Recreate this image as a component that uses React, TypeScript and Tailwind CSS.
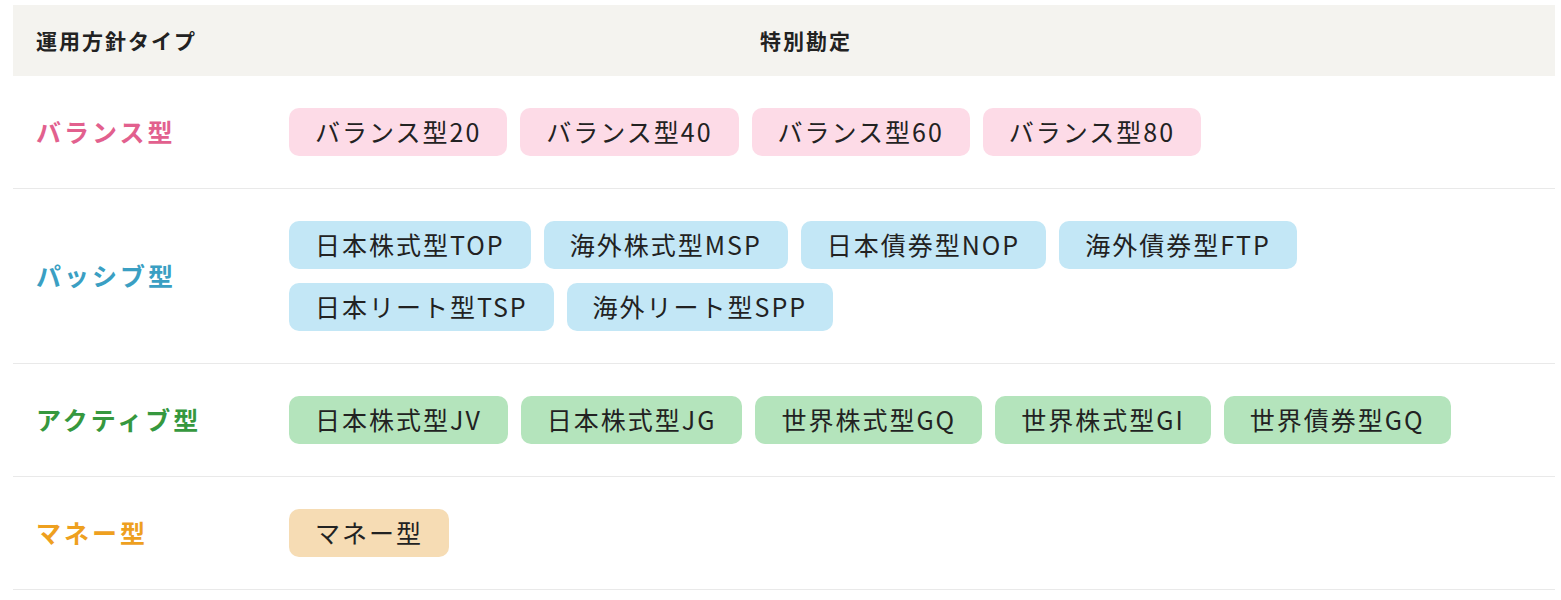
import React from 'react';

type Row = {
  label: string;
  labelColor: string;
  pillColor: string;
  lines: string[][];
};

const rows: Row[] = [
  {
    label: 'バランス型',
    labelColor: 'text-[#e2608e]',
    pillColor: 'bg-[#fddbe7]',
    lines: [['バランス型20', 'バランス型40', 'バランス型60', 'バランス型80']],
  },
  {
    label: 'パッシブ型',
    labelColor: 'text-[#3a9fc3]',
    pillColor: 'bg-[#c3e7f6]',
    lines: [
      ['日本株式型TOP', '海外株式型MSP', '日本債券型NOP', '海外債券型FTP'],
      ['日本リート型TSP', '海外リート型SPP'],
    ],
  },
  {
    label: 'アクティブ型',
    labelColor: 'text-[#36983e]',
    pillColor: 'bg-[#b4e4bc]',
    lines: [['日本株式型JV', '日本株式型JG', '世界株式型GQ', '世界株式型GI', '世界債券型GQ']],
  },
  {
    label: 'マネー型',
    labelColor: 'text-[#eea01f]',
    pillColor: 'bg-[#f6dcb4]',
    lines: [['マネー型']],
  },
];

const Pills: React.FC<{ row: Row }> = ({ row }) => (
  <div className="flex flex-col gap-[14px]">
    {row.lines.map((line, i) => (
      <div key={i} className="flex gap-[13px]">
        {line.map((item) => (
          <span
            key={item}
            className={`${row.pillColor} h-[48px] px-[26px] rounded-[10px] flex items-center text-[25px] tracking-[2px] text-[#222] whitespace-nowrap`}
          >
            {item}
          </span>
        ))}
      </div>
    ))}
  </div>
);

export default function App() {
  return (
    <div className="bg-white min-h-[600px] pt-[5px] pl-[13px] pr-[6px] font-['Noto_Sans_CJK_JP','Noto_Sans',sans-serif]">
      <div className="flex items-center h-[71px] bg-[#f4f3ef] text-[21px] font-bold tracking-[2px] text-[#222]">
        <div className="w-[276px] pl-[23px]">運用方針タイプ</div>
        <div className="w-[1034px] text-center">特別勘定</div>
      </div>
      {rows.map((row) => (
        <div key={row.label} className="flex items-center py-8 border-b border-[#e9e9e9]">
          <div className={`w-[276px] pl-[23px] text-[25px] font-bold tracking-[3px] ${row.labelColor}`}>
            {row.label}
          </div>
          <Pills row={row} />
        </div>
      ))}
    </div>
  );
}
